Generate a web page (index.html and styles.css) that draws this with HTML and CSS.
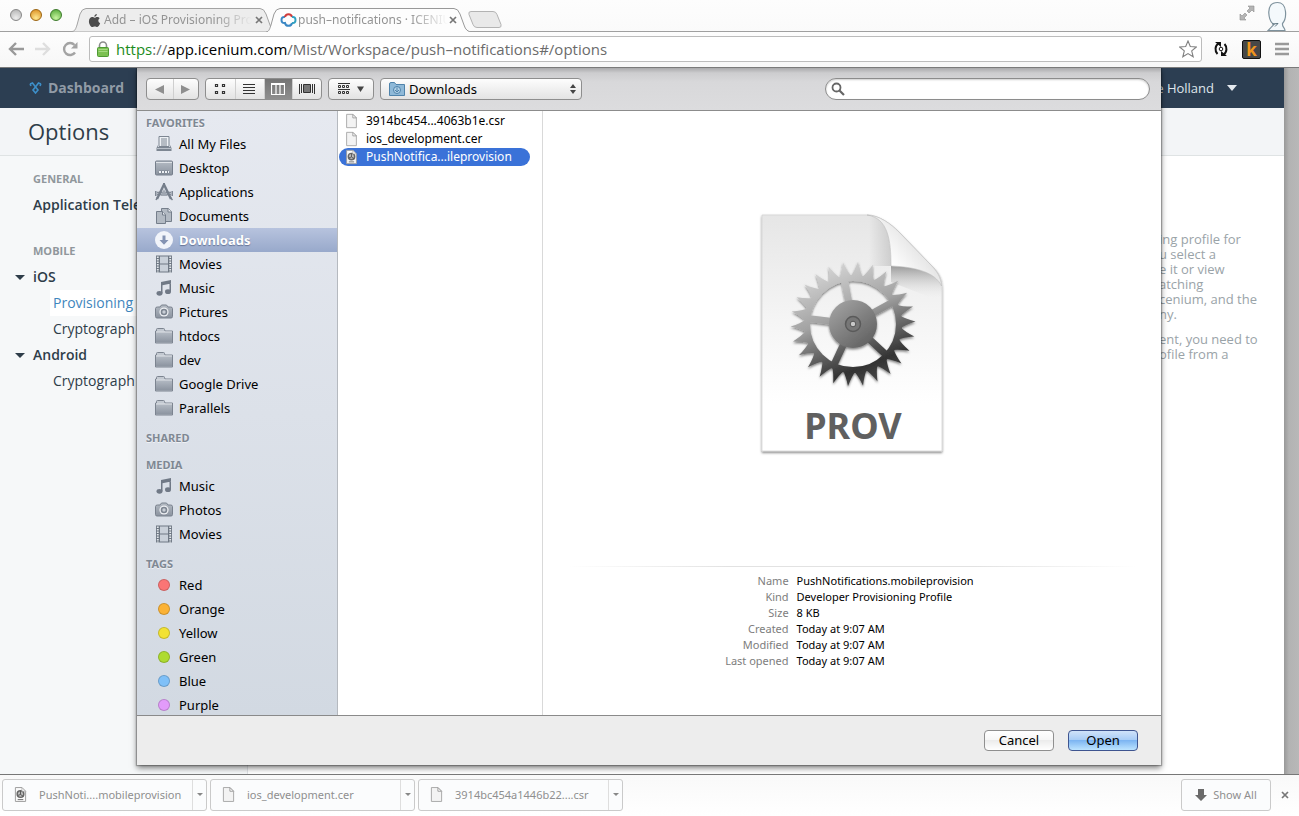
FILE: index.html
```html
<!DOCTYPE html>
<html lang="en">
<head>
<meta charset="utf-8">
<title>push-notifications - ICENIUM</title>
<link rel="stylesheet" href="styles.css">
</head>
<body>
<svg class="defs" aria-hidden="true">
  <defs>
    <linearGradient id="gFolder" x1="0" y1="0" x2="0" y2="1"><stop offset="0" stop-color="#b4bbc4"/><stop offset="1" stop-color="#8b939f"/></linearGradient>
    <linearGradient id="gGear" x1="0.2" y1="0" x2="0.6" y2="1"><stop offset="0" stop-color="#dedede"/><stop offset="0.45" stop-color="#a2a2a2"/><stop offset="0.62" stop-color="#707070"/><stop offset="0.85" stop-color="#333"/><stop offset="1" stop-color="#4a4a4a"/></linearGradient>
    <linearGradient id="gHub" x1="0" y1="0" x2="0.8" y2="1"><stop offset="0" stop-color="#a8a8a8"/><stop offset="1" stop-color="#606060"/></linearGradient>
    <linearGradient id="gSheet" x1="0" y1="0" x2="0" y2="1"><stop offset="0" stop-color="#e6e6e6"/><stop offset="0.45" stop-color="#f5f5f5"/><stop offset="0.8" stop-color="#fff"/></linearGradient>
    <linearGradient id="gCurl" x1="0" y1="0.75" x2="0.6" y2="0.3"><stop offset="0" stop-color="#c9c9c9"/><stop offset="0.4" stop-color="#fff"/><stop offset="1" stop-color="#e4e4e4"/></linearGradient>
    <linearGradient id="gFold" x1="0" y1="0" x2="0" y2="1"><stop offset="0" stop-color="#777" stop-opacity="0.7"/><stop offset="1" stop-color="#fff" stop-opacity="0"/></linearGradient>
    <linearGradient id="gSide" x1="0" y1="0" x2="1" y2="0"><stop offset="0" stop-color="#aaa" stop-opacity="0"/><stop offset="1" stop-color="#aaa" stop-opacity="0.45"/></linearGradient>
    <symbol id="files" viewBox="0 0 18 18"><path d="M4 1.500h10v10H4z" fill="#eef1f5" stroke="#7d8692"/><path d="M6 4h6M6 6h6M6 8h6M6 10h6" stroke="#7d8692"/><path d="M3 10l-1.500 3v3h15v-3L15 10v2H3z" fill="#7d8692"/><path d="M2 13.500h14" stroke="#b9c0c9"/></symbol>
    <symbol id="desktop" viewBox="0 0 18 18"><rect x=".5" y="2" width="17" height="14" rx="1" fill="url(#gFolder)" stroke="#757e8b"/><path d="M1 3.500h16" stroke="#dfe3e8"/><path d="M3 14.500l1.500-3h9l1.500 3z" fill="#7a8390"/><path d="M4 13h10" stroke="#eef1f5" stroke-width="2" stroke-dasharray="2 1"/></symbol>
    <symbol id="apps" viewBox="0 0 18 18"><path d="M2 10.500h14" stroke="#757e8b" stroke-width="3.500"/><path d="M2 10.500h14" stroke="#b5bbc4" stroke-width="1.500"/><path d="M5.500 13l3.500-7 3.500 7z" fill="#9fa6b1"/><path d="M9 1.500L2 16M9 1.500L16 16" stroke="#757e8b" stroke-width="2.400" fill="none"/><path d="M8 .5h2M15 14l2.500 3M.8 8v5M17.200 8v5M1 17l1.500-3" stroke="#757e8b" stroke-width="1.400"/></symbol>
    <symbol id="docs" viewBox="0 0 18 18"><path d="M6.500 1.500h7l3 3v10h-10z" fill="#b3bac3" stroke="#757e8b"/><path d="M13 1.500V5h4" fill="#e6e9ee" stroke="#757e8b"/><path d="M1.500 4.500h6l3 3v9h-9z" fill="#b3bac3" stroke="#757e8b"/><path d="M7.500 4.500V8h3" fill="#e6e9ee" stroke="#757e8b"/></symbol>
    <symbol id="down" viewBox="0 0 18 18"><circle cx="9" cy="9" r="9" fill="#f1f4fa"/><path d="M7.500 4.500h3V9h3L9 13.800 4.500 9h3z" fill="#8493b3"/></symbol>
    <symbol id="movie" viewBox="0 0 18 18"><rect x="1" y=".5" width="16" height="17" fill="#6f7884"/><path d="M5 1.500h8v7H5zM5 9.500h8v7H5z" fill="#c9d0d9"/><path d="M2.800 1.500v16M15.200 1.500v16" stroke="#e3e7ec" stroke-width="1.800" stroke-dasharray="1.500 1"/></symbol>
    <symbol id="music" viewBox="0 0 18 18"><path d="M6 3l10-2v3.500L7.500 6.200V14H6zM14.500 3H16v9.500h-1.500z" fill="#707986"/><ellipse cx="4.500" cy="14.300" rx="3" ry="2.400" fill="#707986"/><ellipse cx="13" cy="12.700" rx="3" ry="2.400" fill="#707986"/></symbol>
    <symbol id="camera" viewBox="0 0 18 18"><path d="M.5 5.500q0-1.500 2-1.500H5l1.500-2h5L13 4h2.500q2 0 2 1.500v8q0 1.500-1.500 1.500H2Q.5 15 .5 13.500z" fill="url(#gFolder)" stroke="#79818d"/><circle cx="9" cy="9" r="4.600" fill="#eef0f3"/><circle cx="9" cy="9" r="3.300" fill="#7d8591"/><circle cx="9" cy="9" r="1.700" fill="#c9ced6"/></symbol>
    <symbol id="folder" viewBox="0 0 18 18"><path d="M1.500 4V2.500q0-1 1-1h6q1 0 1 1L10 4h7.500v12H.5V4z" fill="#c3c9d1" stroke="#7c8490"/><path d="M1 5h16v10.500H1z" fill="url(#gFolder)"/><path d="M1 5h16" stroke="#dde1e6"/></symbol>
    <symbol id="page" viewBox="0 0 14 18"><path d="M1.500 1.500h7l4 4v11h-11z" fill="#f3f3f3" stroke="#a5a5a5"/><path d="M8.500 1.500v4h4z" fill="#fff" stroke="#999"/></symbol>
    <symbol id="prov" viewBox="0 0 14 18"><path d="M1.500 1.500h7l4 4v11h-11z" fill="#fafafa" stroke="#999"/><circle cx="7" cy="8.500" r="3.600" fill="#bbb" stroke="#666" stroke-width="1.600"/><path d="M7 5v4l3 2M4 10l3-1" stroke="#555" fill="none"/><path d="M4 14.500h6" stroke="#666"/><path d="M8.500 1.500v4h4z" fill="#fff" stroke="#999" stroke-width=".7"/></symbol>
    <path id="tooth" d="M47 -6.500Q52 -3 62.500 0 52 3 47 6.500z" fill="#fff"/>
    <mask id="gearMask" maskUnits="userSpaceOnUse" x="-66" y="-66" width="132" height="132">
      <g transform="rotate(94.600)">
        <g id="t6"><use href="#tooth"/><use href="#tooth" transform="rotate(13.846)"/><use href="#tooth" transform="rotate(27.692)"/><use href="#tooth" transform="rotate(41.538)"/><use href="#tooth" transform="rotate(55.385)"/><use href="#tooth" transform="rotate(69.231)"/></g>
        <use href="#t6" transform="rotate(83.077)"/><use href="#t6" transform="rotate(166.154)"/><use href="#t6" transform="rotate(249.231)"/><use href="#tooth" transform="rotate(332.308)"/><use href="#tooth" transform="rotate(346.154)"/>
      </g>
      <circle r="46" fill="none" stroke="#fff" stroke-width="6"/>
      <g stroke="#fff" stroke-width="7"><path d="M0 0H46" transform="rotate(-101)"/><path d="M0 0H46" transform="rotate(-29)"/><path d="M0 0H46" transform="rotate(43)"/><path d="M0 0H46" transform="rotate(115)"/><path d="M0 0H46" transform="rotate(187)"/></g>
    </mask>
    <filter id="lift" x="-20%" y="-20%" width="140%" height="140%"><feDropShadow dx="0" dy="1.500" stdDeviation="1.200" flood-color="#000" flood-opacity="0.5"/></filter>
  </defs>
</svg>

<header class="tabstrip">
  <div class="lights">
    <button class="light gray" aria-label="Close window"></button>
    <button class="light amber" aria-label="Minimize window"></button>
    <button class="light green" aria-label="Zoom window"></button>
  </div>
  <nav class="tabs">
    <div class="tab">
      <svg class="tab-shape" viewBox="0 0 206 24" preserveAspectRatio="none"><path d="M0 23.500C3 23.500 4 20 5 17L8 6Q10 .5 14 .5H188Q192 .5 194 6L198 17Q200 23.500 206 23.500" fill="#ededed" stroke="#a3a3a3"/></svg>
      <svg class="fav" viewBox="0 0 14 14"><path d="M9.500 0c.1 1.600-1.200 3-2.700 3C6.600 1.600 8 .2 9.500 0zM7 4c.8 0 1.700-.9 3-.8 1 0 2 .6 2.600 1.400-2.200 1.400-1.800 4.300.5 5.200C12.400 11.800 11.200 14 10 14c-1 0-1.500-.6-2.700-.6S5.500 14 4.600 14C3 14 1 10.700 1 8c0-3 1.700-4.700 3.500-4.700C5.700 3.300 6.300 4 7 4z" fill="#4c4c4c"/></svg>
      <a class="tab-title" href="#apple">Add – iOS Provisioning Pro</a>
      <button class="x" aria-label="Close tab"><svg viewBox="0 0 8 8"><path d="M1 1l6 6M7 1L1 7" stroke="#777" stroke-width="1.700"/></svg></button>
    </div>
    <div class="tab active">
      <svg class="tab-shape" viewBox="0 0 206 24" preserveAspectRatio="none"><path d="M0 24C3 24 4 20 5 17L8 6Q10 .5 14 .5H188Q192 .5 194 6L198 17Q200 24 206 24" fill="#fdfdfd" stroke="#999"/></svg>
      <svg class="fav wide" viewBox="0 0 16 14"><path d="M4.500 4Q1 3.500 1 7T4.500 10Q5 12.800 8 12.800T11.500 10" fill="none" stroke="#3a87c4" stroke-width="2"/><path d="M4.500 4Q5 1.200 8 1.200T11.500 4" fill="none" stroke="#cf3b3b" stroke-width="2"/><path d="M11.500 4Q15 3.500 15 7T11.500 10" fill="none" stroke="#2f9fc0" stroke-width="2"/></svg>
      <a class="tab-title" href="#icenium">push–notifications · ICENIU</a>
      <button class="x" aria-label="Close tab"><svg viewBox="0 0 8 8"><path d="M1 1l6 6M7 1L1 7" stroke="#777" stroke-width="1.700"/></svg></button>
    </div>
    <button class="newtab" aria-label="New tab"><svg viewBox="0 0 34 17"><path d="M3 .5h22q3 0 4 3l4 10q.8 3-2 3H9q-3 0-4-3L1 3.500Q0 .5 3 .5z" fill="#e9e9e9" stroke="#b3b3b3"/></svg></button>
  </nav>
  <div class="winicons">
    <button class="plain" aria-label="Full screen"><svg width="16" height="16" viewBox="0 0 16 16"><path d="M9 1h6v6l-2-2-3 3-2-2 3-3zM7 15H1V9l2 2 3-3 2 2-3 3z" fill="#b5b5b5" stroke="#8d8d8d" stroke-width=".6"/></svg></button>
    <svg width="20" height="30" viewBox="0 0 20 30"><path d="M10.500 1.500C4 1.500 1.500 6 1.800 12c.3 6 2.500 10 5.200 11.500L1 29.500h17c0-3-3-3-2.500-7 2.500-3 3.500-7 3-12-.5-6-4-9-8-9z" fill="#f4f9fc" stroke="#7e929d" stroke-width="1.200"/><path d="M5 23l6-.5-3 3" fill="none" stroke="#5d7480"/></svg>
  </div>
</header>

<div class="urlbar">
  <div class="navbtns">
    <button class="plain" aria-label="Back"><svg width="16" height="14" viewBox="0 0 16 14"><path d="M8 1L2 7l6 6M2 7h14" fill="none" stroke="#999" stroke-width="2.400"/></svg></button>
    <button class="plain" aria-label="Forward"><svg width="16" height="14" viewBox="0 0 16 14"><path d="M8 1l6 6-6 6M14 7H0" fill="none" stroke="#dedede" stroke-width="2.400"/></svg></button>
    <button class="plain" aria-label="Reload"><svg width="16" height="16" viewBox="0 0 16 16"><path d="M13 11.500A6 6 0 1 1 12.500 4" fill="none" stroke="#a3a3a3" stroke-width="2.400"/><path d="M15.500 1v6.500H9z" fill="#a3a3a3"/></svg></button>
  </div>
  <div class="address">
    <svg width="12" height="16" viewBox="0 0 12 16"><path d="M2.500 8V4.500a3.500 3.500 0 0 1 7 0V8" fill="none" stroke="#8c8c8c" stroke-width="1.600"/><rect x=".5" y="6.500" width="11" height="9" rx="1" fill="#7cc152" stroke="#4e9a33"/><path d="M1.500 8.500h9M1.500 10.500h9" stroke="#a5da82"/></svg>
    <div class="url" role="textbox" aria-label="Address" contenteditable="true" spellcheck="false"><span class="secure">https</span>://<span class="host">app.icenium.com</span>/Mist/Workspace/push–notifications#/options</div>
    <button class="plain" aria-label="Bookmark"><svg width="18" height="18" viewBox="0 0 18 18"><path d="M9 1l2.300 5.500 6 .5-4.600 3.900 1.500 5.900L9 13.600l-5.200 3.200 1.500-5.900L.7 7l6-.5z" fill="#fff" stroke="#808080" stroke-width="1.100"/></svg></button>
  </div>
  <div class="exts">
    <button class="plain" aria-label="Sync"><svg width="14" height="16" viewBox="0 0 14 16"><path d="M4.500 2.500C1 4.500.5 10 3.500 13M9.500 13.500c3.500-2 4-7.500 1-10.500" fill="none" stroke="#111" stroke-width="2"/><path d="M1 1h6v5zM13 15H7v-5z" fill="#111"/><circle cx="7" cy="8" r="1.800" fill="none" stroke="#111"/></svg></button>
    <button class="kext" aria-label="k extension">k</button>
    <button class="plain" aria-label="Menu"><svg width="14" height="14" viewBox="0 0 14 14"><path d="M0 2h14M0 7h14M0 12h14" stroke="#999" stroke-width="2.600"/></svg></button>
  </div>
</div>

<main class="page">
  <div class="workspace">
    <header class="appbar">
      <a class="brand" href="#dashboard"><svg width="13" height="12" viewBox="0 0 13 12"><path d="M1 2l2.500-1L6.500 5l3-4L12 2M6.500 5L4 8l2.500 3L9 8zM1 2l1 2M12 2l-1 2" fill="none" stroke="#3d8fc9" stroke-width="1.600"/></svg>Dashboard</a>
      <button class="user">e Holland<svg width="10" height="6" viewBox="0 0 10 6"><path d="M0 0h10L5 6z" fill="#e4e9ee"/></svg></button>
    </header>
    <h1 class="title">Options</h1>
    <div class="columns">
      <nav class="options">
        <h2>GENERAL</h2>
        <a class="strong" href="#tel">Application Tele</a>
        <h2 class="second">MOBILE</h2>
        <a class="strong group" href="#ios">iOS</a>
        <a class="leaf current" href="#prov">Provisioning</a>
        <a class="leaf" href="#crypt">Cryptograph</a>
        <a class="strong group" href="#android">Android</a>
        <a class="leaf" href="#crypt2">Cryptograph</a>
      </nav>
      <aside class="help">
        <p>ing profile for<br>u select a<br>e it or view<br>atching<br>cenium, and the<br>ny.</p>
        <p>ent, you need to<br>ofile from a</p>
      </aside>
    </div>
  </div>
  <div class="linen"></div>

  <section class="dialog" role="dialog" aria-label="Open file">
    <div class="dtools">
      <div class="seg">
        <button aria-label="Back"><svg width="9" height="9" viewBox="0 0 9 9"><path d="M9 0v9L0 4.500z" fill="#8f8f8f"/></svg></button>
        <button aria-label="Forward"><svg width="9" height="9" viewBox="0 0 9 9"><path d="M0 0v9l9-4.500z" fill="#8f8f8f"/></svg></button>
      </div>
      <div class="seg views">
        <button aria-label="Icons"><svg width="12" height="12" viewBox="0 0 12 12"><path d="M1.500 1.500h2v2h-2zM8.500 1.500h2v2h-2zM1.500 8.500h2v2h-2zM8.500 8.500h2v2h-2z" fill="none" stroke="#333" stroke-width="1.200"/></svg></button>
        <button aria-label="List"><svg width="12" height="12" viewBox="0 0 12 12"><path d="M0 1.500h12M0 4.500h12M0 7.500h12M0 10.500h12" stroke="#333"/></svg></button>
        <button class="on" aria-label="Columns"><svg width="14" height="12" viewBox="0 0 14 12"><path d="M.5 .5h13v11H.5zM.5 1.500h13M5 1v10M9 1v10" fill="none" stroke="#fff" stroke-width="1.200"/></svg></button>
        <button aria-label="Cover flow"><svg width="16" height="12" viewBox="0 0 16 12"><path d="M.5 1v10M2.500 1v9M13.500 1v9M15.500 1v10" stroke="#333"/><path d="M4.500 1.500h7v8h-7z" fill="#777" stroke="#333"/></svg></button>
      </div>
      <div class="seg arrange">
        <button aria-label="Arrange"><svg width="27" height="12" viewBox="0 0 27 12"><path d="M0 .5h12M0 6.500h12" stroke="#333"/><path d="M.5 2.500h2v2h-2zM4.500 2.500h2v2h-2zM8.500 2.500h2v2h-2zM.5 8.500h2v2h-2zM4.500 8.500h2v2h-2zM8.500 8.500h2v2h-2z" fill="none" stroke="#333"/><path d="M19 3.500h7l-3.500 5.500z" fill="#444"/></svg></button>
      </div>
      <div class="where">
        <svg width="16" height="14" viewBox="0 0 16 14"><path d="M.5 13.500V2q0-1.500 1.500-1.500h3.500L7 2.500h8.500v11z" fill="#8fb9d8" stroke="#4f83ab"/><circle cx="8" cy="8" r="3.500" fill="#b5d3e8" stroke="#4f83ab"/><path d="M8 5.500v4M6 8l2 2 2-2" fill="none" stroke="#4f83ab"/></svg>
        <select aria-label="Folder"><option>Downloads</option></select>
        <svg width="6" height="10" viewBox="0 0 6 10"><path d="M0 4l3-4 3 4zM0 6l3 4 3-4z" fill="#444"/></svg>
      </div>
      <label class="search"><svg width="14" height="14" viewBox="0 0 14 14"><circle cx="5.500" cy="5.500" r="4" fill="none" stroke="#666" stroke-width="1.800"/><path d="M8.500 8.500L13 13" stroke="#666" stroke-width="2.200"/></svg><input type="search" aria-label="Search"></label>
    </div>

    <div class="dbody">
      <nav class="places">
        <h3>FAVORITES</h3>
        <ul>
          <li><svg><use href="#files"/></svg>All My Files</li>
          <li><svg><use href="#desktop"/></svg>Desktop</li>
          <li><svg><use href="#apps"/></svg>Applications</li>
          <li><svg><use href="#docs"/></svg>Documents</li>
          <li class="sel"><svg><use href="#down"/></svg>Downloads</li>
          <li><svg><use href="#movie"/></svg>Movies</li>
          <li><svg><use href="#music"/></svg>Music</li>
          <li><svg><use href="#camera"/></svg>Pictures</li>
          <li><svg><use href="#folder"/></svg>htdocs</li>
          <li><svg><use href="#folder"/></svg>dev</li>
          <li><svg><use href="#folder"/></svg>Google Drive</li>
          <li><svg><use href="#folder"/></svg>Parallels</li>
        </ul>
        <h3>SHARED</h3>
        <h3>MEDIA</h3>
        <ul>
          <li><svg><use href="#music"/></svg>Music</li>
          <li><svg><use href="#camera"/></svg>Photos</li>
          <li><svg><use href="#movie"/></svg>Movies</li>
        </ul>
        <h3>TAGS</h3>
        <ul>
          <li><i class="dot red"></i>Red</li>
          <li><i class="dot orange"></i>Orange</li>
          <li><i class="dot yellow"></i>Yellow</li>
          <li><i class="dot lime"></i>Green</li>
          <li><i class="dot blue"></i>Blue</li>
          <li><i class="dot purple"></i>Purple</li>
        </ul>
      </nav>
      <ul class="files">
        <li><svg><use href="#page"/></svg>3914bc454...4063b1e.csr</li>
        <li><svg><use href="#page"/></svg>ios_development.cer</li>
        <li class="sel"><svg><use href="#prov"/></svg>PushNotifica...ileprovision</li>
      </ul>
      <div class="preview">
        <div class="art">
          <svg width="190" height="246" viewBox="0 0 190 246">
            <g filter="url(#lift)"><path d="M5 5H110C122 5 134 14 142 22L172 53C182 62 185 68 185 78V241H5z" fill="url(#gSheet)" stroke="#d0d0d0" stroke-width=".7"/></g>
            <path d="M112 5C128 8 134 22 134 56H112z" fill="url(#gSide)"/>
            <path d="M134 56C160 57 180 62 185 78V92L134 72z" fill="url(#gFold)"/>
            <path d="M110 5C122 5 134 14 142 22L172 53C180 61 184 67 184.500 76C178 62 158 57 134 56C134 30 131 8 110 5z" fill="url(#gCurl)" stroke="#bbb" stroke-width=".6"/>
            <g transform="translate(96 114)" filter="url(#lift)">
              <rect x="-64" y="-64" width="128" height="128" fill="url(#gGear)" mask="url(#gearMask)"/>
              <circle r="24" fill="url(#gHub)"/>
              <circle r="7.500" fill="#777" stroke="#5a5a5a" stroke-width="1.500"/>
              <circle r="2.800" fill="#c8c8c8" stroke="#555"/>
            </g>
            <text class="prov-text" x="96" y="229" text-anchor="middle">PROV</text>
          </svg>
        </div>
        <table class="meta">
          <tr><th scope="row">Name</th><td>PushNotifications.mobileprovision</td></tr>
          <tr><th scope="row">Kind</th><td>Developer Provisioning Profile</td></tr>
          <tr><th scope="row">Size</th><td>8 KB</td></tr>
          <tr><th scope="row">Created</th><td>Today at 9:07 AM</td></tr>
          <tr><th scope="row">Modified</th><td>Today at 9:07 AM</td></tr>
          <tr><th scope="row">Last opened</th><td>Today at 9:07 AM</td></tr>
        </table>
      </div>
    </div>
    <footer class="dfoot">
      <button class="push">Cancel</button>
      <button class="push default">Open</button>
    </footer>
  </section>
</main>

<footer class="shelf">
  <div class="dl"><button class="dl-name"><svg><use href="#prov"/></svg>PushNoti....mobileprovision</button><button class="dl-menu" aria-label="Options"></button></div>
  <div class="dl"><button class="dl-name"><svg><use href="#page"/></svg>ios_development.cer</button><button class="dl-menu" aria-label="Options"></button></div>
  <div class="dl"><button class="dl-name"><svg><use href="#page"/></svg>3914bc454a1446b22....csr</button><button class="dl-menu" aria-label="Options"></button></div>
  <button class="showall"><svg width="12" height="12" viewBox="0 0 12 12"><path d="M3 0h6v6h3l-6 6-6-6h3z" fill="#6a6a6a"/></svg>Show All</button>
  <button class="x" aria-label="Close downloads bar"><svg viewBox="0 0 8 8"><path d="M1 1l6 6M7 1L1 7" stroke="#777" stroke-width="1.700"/></svg></button>
</footer>
</body>
</html>
```

FILE: styles.css
```css
* { box-sizing: border-box; }
body {
  margin: 0;
  height: 100vh;
  display: flex;
  flex-direction: column;
  overflow: hidden;
  background: #fff;
  color: #000;
  font: 13px/24px "Noto Sans", "Open Sans", sans-serif;
}
button {
  margin: 0;
  padding: 0;
  border: 0;
  background: none;
  font: inherit;
  color: inherit;
}
button, svg { flex: none; }
a { color: inherit; text-decoration: none; }
ul { margin: 0; padding: 0; list-style: none; }
.defs { position: absolute; width: 0; height: 0; }
.plain { display: flex; }

/* Tab strip */
.tabstrip {
  display: flex;
  height: 32px;
  padding: 0 12px 0 10px;
  background: linear-gradient(#fdfdfd, #fafafa);
  box-shadow: inset 0 -1px #a0a0a0;
}
.lights { display: flex; gap: 8px; padding-top: 9px; }
.light { width: 12px; height: 12px; border-radius: 50%; border: 1px solid #888; }
.gray { background: radial-gradient(circle at 50% 80%, #eee, #b0b0b0); }
.amber { background: radial-gradient(circle at 50% 80%, #ffe890, #d98a1c); border-color: #9c6410; }
.green { background: radial-gradient(circle at 50% 80%, #c8f5a0, #4fa634); border-color: #3c7a2a; }
.tabs { display: flex; align-items: flex-end; margin-left: 10px; }
.tab {
  position: relative;
  display: flex;
  align-items: center;
  width: 206px;
  height: 24px;
  padding: 0 15px 0 16px;
  margin-right: -12px;
}
.active { z-index: 1; padding-left: 14px; }
.tab-shape { position: absolute; left: 0; top: 0; width: 100%; height: 100%; }
.fav { position: relative; width: 13px; height: 13px; }
.wide { width: 17px; height: 14px; }
.tab-title {
  position: relative;
  flex: 1;
  margin: 0 3px;
  overflow: hidden;
  white-space: nowrap;
  font-size: 12px;
  color: #949494;
  -webkit-mask-image: linear-gradient(to right, #000 75%, transparent);
  mask-image: linear-gradient(to right, #000 75%, transparent);
}
.active .tab-title { margin: 0 1px; }
.x { position: relative; display: flex; width: 8px; }
.x svg { width: 8px; height: 8px; }
.newtab { display: flex; width: 34px; height: 17px; margin: 0 0 4px 8px; }
.newtab svg { width: 34px; height: 17px; }
.winicons { display: flex; gap: 12px; margin-left: auto; padding-top: 1px; }
.winicons .plain { padding-top: 4px; }

/* Address row */
.urlbar {
  display: flex;
  align-items: center;
  height: 36px;
  padding: 0 10px 1px 8px;
  gap: 11px;
  background: linear-gradient(#fdfdfd, #f7f7f7);
  border-bottom: 1px solid #7a7a7a;
}
.navbtns { display: flex; align-items: center; gap: 11px; }
.address {
  display: flex;
  align-items: center;
  flex: 1;
  height: 26px;
  padding: 0 4px 0 7px;
  gap: 7px;
  background: #fff;
  border: 1px solid #bcbcbc;
  border-radius: 3px;
}
.url { flex: 1; font-family: "Open Sans", sans-serif; font-size: 15px; color: #6b6b6b; white-space: nowrap; outline: 0; }
.secure { color: #1c8c1c; }
.host { color: #000; }
.exts { display: flex; align-items: center; gap: 14px; margin-left: 1px; }
.kext {
  width: 19px;
  height: 19px;
  border: 1px solid #111;
  border-radius: 2px;
  background: #474747;
  color: #f0951d;
  font: bold 17px/17px "Open Sans", sans-serif;
}

/* Web page behind the sheet */
.page { position: relative; display: flex; flex: 1; min-height: 0; overflow: hidden; font-family: "Open Sans", sans-serif; }
.workspace { display: flex; flex-direction: column; flex: 1; background: #fff; }
.linen { width: 15px; background: linear-gradient(to right, #999, #b3b3b3 5px, #b8b8b8); }
.appbar {
  display: flex;
  justify-content: space-between;
  align-items: center;
  height: 40px;
  padding: 0 47px 0 29px;
  background: #2c3e52;
}
.brand { display: flex; align-items: center; gap: 6px; font-size: 14px; font-weight: 700; color: #919ba6; }
.user { display: flex; align-items: center; gap: 13px; color: #dfe5ea; }
.title {
  margin: 0;
  height: 48px;
  padding-left: 28px;
  border-bottom: 1px solid #dfe3e4;
  background: #f3f5f7;
  color: #2e3d49;
  font-size: 22px;
  line-height: 46px;
  font-weight: 400;
}
.columns { display: flex; flex: 1; justify-content: space-between; }
.options {
  display: flex;
  flex-direction: column;
  width: 248px;
  padding-top: 10px;
  background: #f6f8f9;
  border-right: 1px solid #dfe2e6;
  color: #2e3d49;
  font-size: 14px;
  line-height: 26px;
}
.options h2 { margin: 0; padding-left: 33px; font-size: 11px; font-weight: 700; color: #90979c; }
.options .second { margin-top: 20px; }
.strong { padding-left: 33px; font-weight: 600; }
.group { display: flex; align-items: center; padding-left: 15px; gap: 8px; }
.group::before { content: ""; border: 5px solid transparent; border-top-color: #2e3d49; border-bottom: 0; }
.leaf { margin-left: 50px; padding-left: 3px; }
.current { background: #fff; color: #3f86bd; }
.help { width: 125px; padding-top: 76px; color: #9aa3a8; line-height: 15px; white-space: nowrap; }
.help p { margin: 0 0 10px; }

/* Open sheet */
.dialog {
  position: absolute;
  top: 0;
  bottom: 9px;
  left: 137px;
  right: 138px;
  display: flex;
  flex-direction: column;
  background: #fff;
  box-shadow: 0 0 1px 1px rgba(0, 0, 0, .25), 0 3px 6px rgba(0, 0, 0, .5);
  font-family: "Noto Sans", "Open Sans", sans-serif;
}
.dtools {
  display: flex;
  align-items: center;
  gap: 6px;
  height: 43px;
  padding: 0 11px 0 9px;
  background: linear-gradient(#a9a9ab, #cdcdcf 5px, #d8d8da 14px, #dcdcde);
  border-bottom: 1px solid #8c8c8c;
}
.seg, .where {
  display: flex;
  height: 22px;
  border: 1px solid #8e8e8e;
  border-radius: 4px;
  background: linear-gradient(#fdfdfd, #e3e3e3);
  overflow: hidden;
}
.seg { width: 53px; }
.seg.views { width: 117px; }
.seg.arrange { width: 46px; }
.seg button { display: flex; flex: 1; align-items: center; justify-content: center; }
.seg button + button { box-shadow: inset 1px 0 #cfcfcf; }
.seg .on { background: linear-gradient(#757575, #8e8e8e); }
.where { align-items: center; width: 202px; padding: 0 5px 0 8px; gap: 4px; }
.where select {
  flex: 1;
  height: 20px;
  padding: 0;
  border: 0;
  background: none;
  appearance: none;
  font: inherit;
  line-height: 20px;
  color: #000;
}
.search {
  display: flex;
  align-items: center;
  width: 325px;
  height: 22px;
  margin-left: auto;
  padding: 0 8px 0 5px;
  border: 1px solid #8c8c8c;
  border-radius: 11px;
  background: #fff;
  box-shadow: inset 0 1px 2px rgba(0, 0, 0, .2);
}
.search input { flex: 1; min-width: 0; border: 0; padding: 0 4px; background: none; outline: 0; font: inherit; line-height: 18px; }
.dbody { display: flex; flex: 1; min-height: 0; }
.places {
  width: 201px;
  padding-top: 3px;
  overflow: hidden;
  border-right: 1px solid #b5b9bf;
  background: linear-gradient(#e6e9f0, #d2d9e2);
}
.places h3 { margin: 0 0 9px; padding-left: 9px; font-size: 11px; line-height: 18px; font-weight: 700; color: #7f8893; text-shadow: 0 1px rgba(255, 255, 255, .6); }
.places h3:has(+ ul) { margin-bottom: 0; }
.places ul { margin-bottom: 9px; }
.places li { display: flex; align-items: center; gap: 6px; height: 24px; padding-left: 18px; }
.places li svg { width: 18px; height: 18px; }
.places .sel {
  background: linear-gradient(#b7c3de, #98a9cb);
  color: #fff;
  font-weight: 700;
  text-shadow: 0 1px 1px rgba(60, 75, 110, .6);
}
.dot { width: 12px; height: 12px; margin: 0 3px; border-radius: 50%; border: 1px solid rgba(0, 0, 0, .18); }
.red { background: #fa7575; }
.orange { background: #fbb235; }
.yellow { background: #f2e233; }
.lime { background: #aedb31; }
.blue { background: #7fc0f8; }
.purple { background: #e29bfa; }
.files { width: 205px; padding-top: 1px; border-right: 1px solid #d9d9d9; font-size: 12px; line-height: 18px; }
.files li { display: flex; align-items: center; gap: 8px; width: 191px; height: 18px; margin-left: 1px; padding-left: 6px; border-radius: 9px; }
.files svg { width: 13px; height: 16px; }
.files .sel { background: #3a72d8; color: #fff; }
.preview { display: flex; flex-direction: column; flex: 1; }
.art { display: flex; flex: 1; align-items: center; justify-content: center; padding-bottom: 12px; }
.prov-text { font: 700 36px "Noto Sans", sans-serif; fill: #606060; }
.meta {
  width: 100%;
  height: 149px;
  padding: 7px 4px 46px 0;
  border-spacing: 0;
  table-layout: fixed;
  font-size: 11px;
  line-height: 16px;
  background: linear-gradient(to right, transparent 4%, #e2e2e2 30%, #e2e2e2 70%, transparent 96%) top / 100% 1px no-repeat;
}
.meta th, .meta td { padding: 0; height: 16px; }
.meta th { width: 40%; text-align: right; font-weight: 400; color: #7d7d7d; }
.meta td { padding-left: 8px; }
.dfoot {
  display: flex;
  justify-content: flex-end;
  align-items: center;
  gap: 14px;
  height: 50px;
  padding: 0 23px;
  border-top: 1px solid #8a8a8a;
  background: #ededed;
}
.push {
  width: 70px;
  height: 21px;
  border: 1px solid #8f8f8f;
  border-radius: 4px;
  background: linear-gradient(#fff, #f6f6f6 50%, #ececec 50%, #fff);
  line-height: 19px;
}
.default { border-color: #3f5590; background: linear-gradient(#d0e2f9, #a5cbf6 50%, #7db5f2 50%, #bde4ff); }

/* Downloads shelf */
.shelf {
  display: flex;
  align-items: center;
  gap: 3px;
  height: 42px;
  padding: 0 10px 2px 2px;
  border-top: 1px solid #777;
  background: linear-gradient(#f9f9f9, #fff);
  color: #8f8f8f;
  font-size: 11px;
}
.dl { display: flex; width: 205px; height: 32px; border: 1px solid #cacaca; border-radius: 3px; background: #fbfcfd; }
.dl-name { display: flex; flex: 1; align-items: center; gap: 12px; padding-left: 11px; white-space: nowrap; }
.dl-name svg { width: 13px; height: 17px; }
.dl-menu { display: flex; align-items: center; justify-content: center; width: 14px; border-left: 1px solid #dedede; }
.dl-menu::before { content: ""; border: 3px solid transparent; border-top-color: #888; border-bottom: 0; }
.showall {
  display: flex;
  align-items: center;
  justify-content: center;
  gap: 6px;
  width: 90px;
  height: 32px;
  margin: 0 7px 0 auto;
  border: 1px solid #cacaca;
  border-radius: 3px;
  background: #fbfcfd;
}
```
